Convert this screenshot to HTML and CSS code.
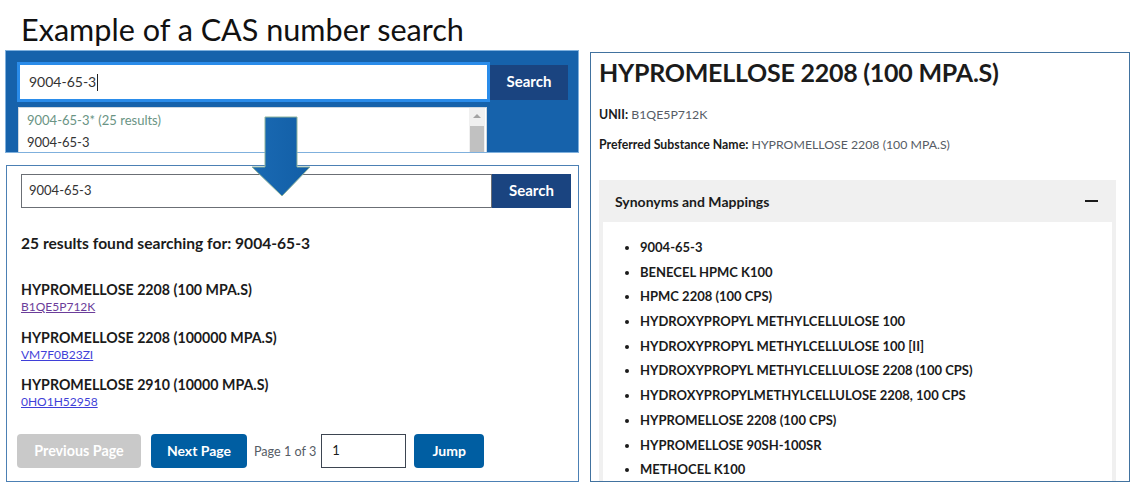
FILE: index.html
```html
<!DOCTYPE html>
<html>
<head>
<meta charset="utf-8">
<link rel="stylesheet" href="styles.css">
</head>
<body>
<div class="page">
  <h1 class="slide-title">Example of a CAS number search</h1>
  <div class="columns">
    <div class="left-col">
      <div class="typeahead-panel">
        <div class="search-row">
          <div class="focus-input">9004-65-3<span class="caret"></span></div>
          <div class="btn-search dark">Search</div>
        </div>
        <div class="dropdown">
          <div class="dd-items">
            <div class="dd-item hint">9004-65-3* (25 results)</div>
            <div class="dd-item">9004-65-3</div>
          </div>
          <div class="dd-scroll">
            <div class="dd-up"></div>
            <div class="dd-thumb"></div>
          </div>
        </div>
      </div>
      <div class="results-panel">
        <div class="search-row2">
          <div class="plain-input">9004-65-3</div>
          <div class="btn-search2">Search</div>
        </div>
        <div class="result-count">25 results found searching for: 9004-65-3</div>
        <div class="result">
          <div class="result-name">HYPROMELLOSE 2208 (100 MPA.S)</div>
          <a class="result-link visited">B1QE5P712K</a>
        </div>
        <div class="result">
          <div class="result-name">HYPROMELLOSE 2208 (100000 MPA.S)</div>
          <a class="result-link">VM7F0B23ZI</a>
        </div>
        <div class="result">
          <div class="result-name">HYPROMELLOSE 2910 (10000 MPA.S)</div>
          <a class="result-link">0HO1H52958</a>
        </div>
        <div class="pager">
          <div class="pbtn disabled">Previous Page</div>
          <div class="pbtn next">Next Page</div>
          <div class="page-of">Page 1 of 3</div>
          <div class="page-input">1</div>
          <div class="pbtn jump">Jump</div>
        </div>
      </div>
    </div>
    <div class="detail-panel">
      <h2 class="detail-title">HYPROMELLOSE 2208 (100 MPA.S)</h2>
      <p class="meta"><b>UNII:</b> B1QE5P712K</p>
      <p class="meta meta2"><b>Preferred Substance Name:</b> HYPROMELLOSE 2208 (100 MPA.S)</p>
      <div class="accordion">
        <div class="acc-head">
          <span>Synonyms and Mappings</span>
          <span class="minus"></span>
        </div>
        <div class="acc-body">
          <ul class="syn-list">
            <li>9004-65-3</li>
            <li>BENECEL HPMC K100</li>
            <li>HPMC 2208 (100 CPS)</li>
            <li>HYDROXYPROPYL METHYLCELLULOSE 100</li>
            <li>HYDROXYPROPYL METHYLCELLULOSE 100 [II]</li>
            <li>HYDROXYPROPYL METHYLCELLULOSE 2208 (100 CPS)</li>
            <li>HYDROXYPROPYLMETHYLCELLULOSE 2208, 100 CPS</li>
            <li>HYPROMELLOSE 2208 (100 CPS)</li>
            <li>HYPROMELLOSE 90SH-100SR</li>
            <li>METHOCEL K100</li>
          </ul>
        </div>
      </div>
    </div>
  </div>
  <svg class="arrow" width="66" height="86" viewBox="0 0 66 86">
    <defs>
      <linearGradient id="ag" x1="0" y1="0" x2="1" y2="0">
        <stop offset="0" stop-color="#1a6ab3"/>
        <stop offset="1" stop-color="#125ea6"/>
      </linearGradient>
    </defs>
    <polygon points="16,3 48,3 48,53 61,53 33,82 3,53 16,53" fill="url(#ag)" stroke="#8fb49c" stroke-width="1"/>
  </svg>
</div>
</body>
</html>
```

FILE: styles.css
```css
* { box-sizing: border-box; }
html, body { margin: 0; padding: 0; background: #ffffff; }
body { font-family: Lato, "Open Sans", sans-serif; color: #1b1b1b; }

.page {
  position: relative;
  width: 1130px;
  height: 483px;
  overflow: hidden;
}

.slide-title {
  margin: 0;
  padding: 13px 0 0 21px;
  height: 50px;
  font-family: Lato, "Open Sans", sans-serif;
  font-weight: 400;
  font-size: 30.6px;
  line-height: 33px;
  color: #111;
}

.columns {
  display: flex;
  align-items: flex-start;
}

.left-col {
  margin-left: 5px;
  width: 574px;
  display: flex;
  flex-direction: column;
  gap: 12px;
}

/* top typeahead panel */
.typeahead-panel {
  height: 103px;
  overflow: hidden;
  background: #1662ab;
  border: 1px solid #7fb0dd;
  padding: 11px 0 0 11px;
}
.search-row { display: flex; align-items: center; }
.focus-input {
  width: 473px;
  height: 40px;
  background: #fff;
  border: 3px solid #2a8cea;
  padding: 0 0 0 9px;
  font-size: 14px;
  line-height: 34px;
  color: #333;
  display: flex;
  align-items: center;
}
.caret { display: inline-block; width: 1px; height: 17px; background: #222; margin-left: 1px; }
.btn-search {
  width: 78px;
  height: 35px;
  background: #1a4480;
  color: #fff;
  font-weight: 700;
  font-size: 15px;
  display: flex;
  align-items: center;
  justify-content: center;
  padding-bottom: 3px;
}
.dropdown {
  margin-top: 5px;
  margin-left: 1px;
  width: 469px;
  height: 50px;
  background: #fff;
  border: 1px solid #cfd8e0;
  display: flex;
}
.dd-items { flex: 1; padding: 1px 0 0 8px; }
.dd-item { font-size: 13px; line-height: 22px; color: #333; }
.dd-item.hint { color: #6a9484; }
.dd-scroll { width: 16px; background: #f0f0f0; margin-right: 1px; display: flex; flex-direction: column; align-items: center; }
.dd-up {
  margin-top: 6px;
  width: 0; height: 0;
  border-left: 4px solid transparent;
  border-right: 4px solid transparent;
  border-bottom: 4px solid #a3a3a3;
}
.dd-thumb { margin-top: 8px; width: 14px; flex: 1; background: #c1c1c1; }

/* results panel */
.results-panel {
  height: 317px;
  border: 1px solid #4c80b4;
  padding: 8px 0 0 14px;
  margin-left: 1px;
}
.search-row2 { display: flex; }
.plain-input {
  width: 471px;
  height: 34px;
  border: 1px solid #6b6f75;
  padding-left: 7px;
  font-size: 13px;
  line-height: 30px;
  color: #333;
}
.btn-search2 {
  width: 79px;
  height: 34px;
  background: #1a4480;
  color: #fff;
  font-weight: 700;
  font-size: 15px;
  display: flex;
  align-items: center;
  justify-content: center;
  padding-bottom: 3px;
}
.result-count {
  margin-top: 25px;
  font-weight: 700;
  font-size: 15.6px;
  line-height: 20px;
}
.result { margin-top: 27px; }
.result + .result { margin-top: 12.5px; }
.result-name { font-weight: 700; font-size: 14.2px; line-height: 19px; }
.result-link {
  display: block;
  font-size: 12px;
  line-height: 16px;
  color: #3f3fd8;
  text-decoration: underline;
}
.result-link.visited { color: #6b3d9a; }

.pager {
  margin-top: 24px;
  margin-left: -4px;
  display: flex;
  align-items: center;
}
.pbtn {
  height: 34px;
  border-radius: 4px;
  color: #fff;
  font-weight: 700;
  font-size: 14px;
  display: flex;
  align-items: center;
  justify-content: center;
  padding-bottom: 2px;
}
.pbtn.disabled { width: 124px; background: #c9c9c9; font-size: 14.3px; }
.pbtn.next { width: 96px; margin-left: 10px; background: #005ea2; }
.page-of { margin-left: 7px; font-size: 12.6px; color: #565c65; }
.page-input {
  margin-left: 5px;
  width: 85px;
  height: 34px;
  border: 1px solid #3d4551;
  padding-left: 10px;
  font-size: 13px;
  line-height: 30px;
}
.pbtn.jump { width: 70px; margin-left: 8px; background: #005ea2; }

/* detail panel */
.detail-panel {
  margin-left: 11px;
  margin-top: 2px;
  width: 540px;
  height: 430px;
  overflow: hidden;
  border: 1px solid #41729f;
  padding: 4px 13px 0 8px;
}
.detail-title {
  margin: 0;
  font-weight: 700;
  font-size: 25px;
  letter-spacing: -0.25px;
  line-height: 30px;
  color: #1b1b1b;
}
.meta {
  margin: 20px 0 0 0;
  font-size: 12.3px;
  line-height: 16px;
  color: #565c65;
}
.meta b { color: #1b1b1b; }
.meta2 { margin-top: 14px; }
.accordion { margin-top: 27px; }
.acc-head {
  height: 42px;
  background: #f0f0f0;
  padding: 0 18px 0 16px;
  display: flex;
  align-items: center;
  justify-content: space-between;
  font-weight: 700;
  font-size: 14px;
}
.minus { width: 13px; height: 2px; background: #1b1b1b; }
.acc-body {
  border-left: 4px solid #f0f0f0;
  border-right: 4px solid #f0f0f0;
  padding: 17px 0 20px 0;
}
.syn-list {
  margin: 0;
  padding-left: 37px;
  font-weight: 700;
  font-size: 13px;
  line-height: 17px;
}
.syn-list li { margin-bottom: 7.7px; }

.arrow {
  position: absolute;
  left: 249px;
  top: 114px;
}
```
